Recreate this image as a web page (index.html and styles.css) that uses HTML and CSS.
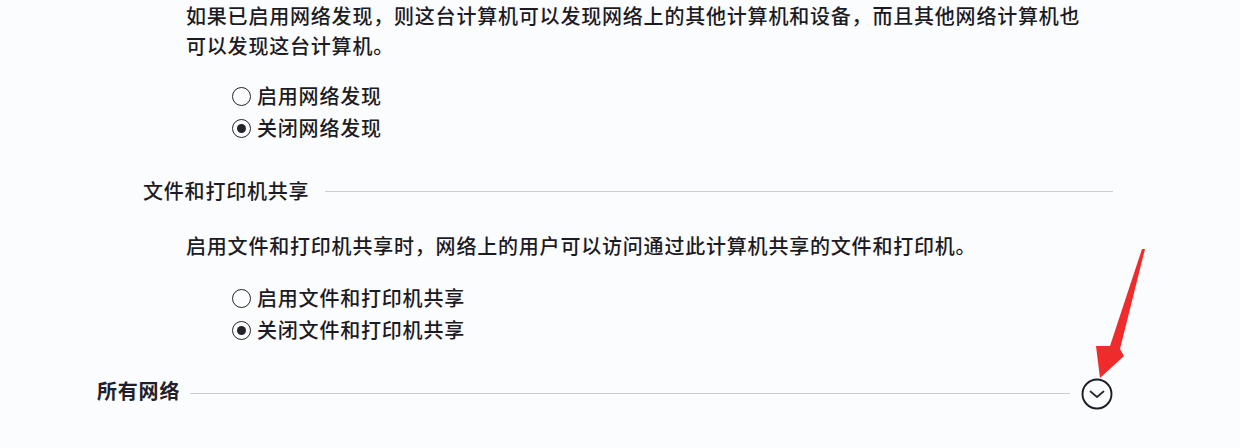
FILE: index.html
```html
<!DOCTYPE html>
<html lang="zh-CN">
<head>
<meta charset="utf-8">
<title>高级共享设置</title>
<link rel="stylesheet" href="styles.css">
</head>
<body>
<main class="page">
  <section class="subsection">
    <div class="subsection-body">
      <p class="desc">如果已启用网络发现，则这台计算机可以发现网络上的其他计算机和设备，而且其他网络计算机也可以发现这台计算机。</p>
      <div class="options">
        <label class="option"><span class="radio"></span><span>启用网络发现</span></label>
        <label class="option"><span class="radio checked"></span><span>关闭网络发现</span></label>
      </div>
    </div>
  </section>

  <section class="subsection">
    <div class="subsection-head">
      <h3 class="subsection-title">文件和打印机共享</h3>
      <span class="rule"></span>
    </div>
    <div class="subsection-body">
      <p class="desc desc-single">启用文件和打印机共享时，网络上的用户可以访问通过此计算机共享的文件和打印机。</p>
      <div class="options options-tight">
        <label class="option"><span class="radio"></span><span>启用文件和打印机共享</span></label>
        <label class="option"><span class="radio checked"></span><span>关闭文件和打印机共享</span></label>
      </div>
    </div>
  </section>

  <section class="category">
    <h2 class="category-title">所有网络</h2>
    <span class="rule rule-category"></span>
    <button class="expand" type="button" aria-label="展开">
      <svg width="32" height="32" viewBox="0 0 32 32">
        <circle cx="16" cy="16" r="14.5" fill="none" stroke="#1c1c24" stroke-width="1.9"/>
        <path d="M9.5 13.5 L16 19 L22.5 13.5" fill="none" stroke="#2a2a33" stroke-width="1.8" stroke-linecap="round" stroke-linejoin="round"/>
      </svg>
    </button>
  </section>

  <svg class="pointer" width="60" height="132" viewBox="0 0 60 132">
    <polygon points="54,0 57,0 32,100 36,107 12,129 8,97 22,97" fill="#ef2b2b"/>
  </svg>
</main>
</body>
</html>
```

FILE: styles.css
```css
* {
  box-sizing: border-box;
}

html, body {
  margin: 0;
  padding: 0;
  background: #fbfcfe;
}

body {
  font-family: "Noto Sans CJK SC", "Noto Sans", sans-serif;
  font-weight: 500;
  color: #1c1b24;
  font-size: 20px;
  letter-spacing: 0.8px;
  width: 1240px;
  height: 448px;
  overflow: hidden;
}

.page {
  position: relative;
  display: flex;
  flex-direction: column;
  padding: 1px 127px 0 97px;
  height: 448px;
}

.subsection {
  display: flex;
  flex-direction: column;
  padding-left: 46px;
}

.subsection + .subsection {
  margin-top: 32px;
}

.subsection-head {
  display: flex;
  align-items: center;
  height: 30px;
}

.subsection-title {
  margin: 0;
  font-size: 20px;
  font-weight: 500;
  line-height: 30px;
}

.rule {
  flex: 1;
  height: 1px;
  background: #c9ccd3;
  margin-left: 16px;
}

.subsection-body {
  display: flex;
  flex-direction: column;
  padding-left: 43px;
}

.desc {
  margin: 0;
  line-height: 30px;
  width: 905px;
}

.desc-single {
  margin-top: 25px;
}

.options {
  display: flex;
  flex-direction: column;
  padding-left: 46px;
  margin-top: 19px;
}

.options-tight {
  margin-top: 21px;
}

.option {
  display: flex;
  align-items: center;
  gap: 6px;
  height: 32px;
  line-height: 32px;
}

.radio {
  width: 19px;
  height: 19px;
  border-radius: 50%;
  border: 1.8px solid #24232b;
  background: #fdfdff;
  display: flex;
  align-items: center;
  justify-content: center;
  flex: none;
}

.radio.checked::after {
  content: "";
  width: 9px;
  height: 9px;
  border-radius: 50%;
  background: #24232b;
}

.category {
  display: flex;
  align-items: center;
  margin-top: 28px;
  height: 34px;
}

.category-title {
  margin: 0;
  font-size: 20px;
  font-weight: 700;
  line-height: 30px;
  color: #231e2b;
}

.rule-category {
  margin: 4px 11px 0 10px;
}

.expand {
  width: 32px;
  height: 32px;
  padding: 0;
  border: 0;
  background: transparent;
  display: flex;
  margin-top: 6px;
}

.pointer {
  position: absolute;
  left: 1088px;
  top: 249px;
}
```
